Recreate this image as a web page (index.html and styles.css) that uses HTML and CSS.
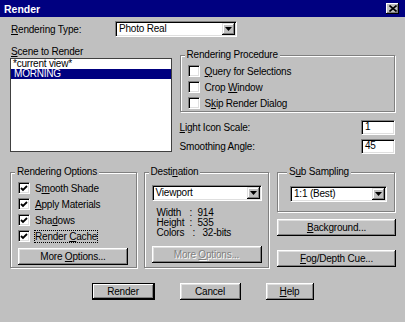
FILE: index.html
```html
<!DOCTYPE html>
<html lang="en">
<head>
    <meta charset="UTF-8">
    <meta name="viewport" content="width=device-width, initial-scale=1.0">
    <title>Render</title>
    <link rel="stylesheet" href="styles.css">
</head>
<body>
    <div class="window">
        <div class="titlebar">
            <span class="title">Render</span>
            <span class="close" aria-label="Close">
                <svg width="8" height="7" viewBox="0 0 8 7"><path d="M0.5 0.5 L7.5 6.5 M7.5 0.5 L0.5 6.5" stroke="#000" stroke-width="1.6"/></svg>
            </span>
        </div>

        <div class="content">
            <div class="type-row">
                <span class="type-label"><u>R</u>endering Type:</span>
                <div class="combo type-combo">
                    <span class="combo-value">Photo Real</span>
                    <span class="combo-arrow"><svg width="7" height="4" viewBox="0 0 7 4"><polygon points="0,0 7,0 3.5,4" fill="#000"/></svg></span>
                </div>
            </div>

            <div class="scene-row">
                <div class="scene-col">
                    <div class="scene-label"><u>S</u>cene to Render</div>
                    <ul class="listbox">
                        <li>*current view*</li>
                        <li class="selected">MORNING</li>
                    </ul>
                </div>

                <div class="proc-col">
                    <fieldset class="group proc-group">
                        <legend>Rendering Procedure</legend>
                        <div class="check-row"><span class="check"></span><span><u>Q</u>uery for Selections</span></div>
                        <div class="check-row"><span class="check"></span><span>Crop <u>W</u>indow</span></div>
                        <div class="check-row"><span class="check"></span><span>S<u>k</u>ip Render Dialog</span></div>
                    </fieldset>
                    <div class="field-row first">
                        <span><u>L</u>ight Icon Scale:</span>
                        <span class="edit">1</span>
                    </div>
                    <div class="field-row">
                        <span>Smoothing Angle:</span>
                        <span class="edit">45</span>
                    </div>
                </div>
            </div>

            <div class="options-row">
                <fieldset class="group opts-group">
                    <legend>Rendering Options</legend>
                    <div class="check-row"><span class="check on"><svg width="8" height="7" viewBox="0 0 8 7"><path d="M1 3 L3 5 L7 1" fill="none" stroke="#000" stroke-width="1.8"/></svg></span><span>S<u>m</u>ooth Shade</span></div>
                    <div class="check-row"><span class="check on"><svg width="8" height="7" viewBox="0 0 8 7"><path d="M1 3 L3 5 L7 1" fill="none" stroke="#000" stroke-width="1.8"/></svg></span><span><u>A</u>pply Materials</span></div>
                    <div class="check-row"><span class="check on"><svg width="8" height="7" viewBox="0 0 8 7"><path d="M1 3 L3 5 L7 1" fill="none" stroke="#000" stroke-width="1.8"/></svg></span><span>Sha<u>d</u>ows</span></div>
                    <div class="check-row"><span class="check on"><svg width="8" height="7" viewBox="0 0 8 7"><path d="M1 3 L3 5 L7 1" fill="none" stroke="#000" stroke-width="1.8"/></svg></span><span class="focused">Render <u>C</u>ache</span></div>
                    <button class="btn opts-btn">More <u>O</u>ptions...</button>
                </fieldset>

                <fieldset class="group dest-group">
                    <legend>Desti<u>n</u>ation</legend>
                    <div class="combo dest-combo">
                        <span class="combo-value">Viewport</span>
                        <span class="combo-arrow"><svg width="7" height="4" viewBox="0 0 7 4"><polygon points="0,0 7,0 3.5,4" fill="#000"/></svg></span>
                    </div>
                    <div class="info">
                        <span>Width</span><span>:</span><span>914</span>
                        <span>Height</span><span>:</span><span>535</span>
                        <span>Colors</span><span class="shift">:</span><span class="shift-more">32-bits</span>
                    </div>
                    <button class="btn dest-btn" disabled>More <u>O</u>ptions...</button>
                </fieldset>

                <div class="side-col">
                    <fieldset class="group sub-group">
                        <legend>S<u>u</u>b Sampling</legend>
                        <div class="combo sub-combo">
                            <span class="combo-value">1:1 (Best)</span>
                            <span class="combo-arrow"><svg width="7" height="4" viewBox="0 0 7 4"><polygon points="0,0 7,0 3.5,4" fill="#000"/></svg></span>
                        </div>
                    </fieldset>
                    <button class="btn side-btn bg-btn"><u>B</u>ackground...</button>
                    <button class="btn side-btn fog-btn"><u>F</u>og/Depth Cue...</button>
                </div>
            </div>

            <div class="actions">
                <button class="btn btn-default render-btn">Render</button>
                <button class="btn cancel-btn">Cancel</button>
                <button class="btn help-btn"><u>H</u>elp</button>
            </div>
        </div>
    </div>
</body>
</html>
```

FILE: styles.css
```css
:root {
    --face: #c0c0c0;
    --shadow: #808080;
    --light: #dfdfdf;
    --navy: #000080;
}

body {
    margin: 0;
    background-color: var(--face);
    font-family: "Liberation Sans", Arial, sans-serif;
    font-size: 10px;
    letter-spacing: -0.2px;
    color: #000;
}

u {
    text-decoration-thickness: 1px;
    text-underline-offset: 1px;
}

.window {
    width: 405px;
    height: 322px;
    background-color: var(--face);
    overflow: hidden;
}

.titlebar {
    height: 17px;
    background-color: var(--navy);
    display: flex;
    align-items: center;
    justify-content: space-between;
    padding: 0 6px 0 4px;
    box-sizing: border-box;
}

.title {
    color: #fff;
    font-weight: bold;
    font-size: 10.5px;
    letter-spacing: 0;
}

.close {
    width: 13px;
    height: 11px;
    background-color: var(--face);
    box-shadow: inset -1px -1px #000, inset 1px 1px #fff, inset -2px -2px var(--shadow);
    display: flex;
    align-items: center;
    justify-content: center;
}

.content {
    padding: 4px 10px 0 10px;
}

/* sunken controls */
.combo,
.edit,
.check {
    box-sizing: border-box;
    background-color: #fff;
    border: 1px solid;
    border-color: var(--shadow) #fff #fff var(--shadow);
    box-shadow: inset 1px 1px #000, inset -1px -1px var(--light);
}

.combo {
    display: flex;
    height: 16px;
    padding: 1px;
}

.combo-value {
    flex: 1;
    line-height: 12px;
    padding-left: 2px;
    white-space: nowrap;
}

.combo-arrow {
    width: 13px;
    background-color: var(--face);
    box-shadow: inset -1px -1px #000, inset 1px 1px var(--light), inset -2px -2px var(--shadow), inset 2px 2px #fff;
    display: flex;
    align-items: center;
    justify-content: center;
}

.type-row {
    display: flex;
    align-items: center;
    height: 16px;
}

.type-label {
    width: 105px;
    padding-left: 1px;
    box-sizing: border-box;
}

.type-combo {
    width: 122px;
}

.scene-row {
    display: flex;
    gap: 8px;
    margin-top: 9px;
}

.scene-col {
    width: 162px;
}

.scene-label {
    height: 12px;
    line-height: 12px;
    padding-left: 1px;
}

.listbox {
    list-style: none;
    margin: 0;
    padding: 0;
    height: 94px;
    box-sizing: border-box;
    background-color: #fff;
    border: 1px solid #404040;
}

.listbox li {
    height: 10px;
    line-height: 10px;
    padding-left: 2px;
    white-space: nowrap;
}

.listbox .selected {
    background-color: var(--navy);
    color: #fff;
    padding-left: 3px;
}

.proc-col {
    width: 216px;
    margin-top: 3px;
}

/* group boxes */
.group {
    margin: 0;
    padding: 0 6px 0 7px;
    border: 1px solid var(--shadow);
    box-shadow: 1px 1px #fff, inset 1px 1px #fff;
    box-sizing: border-box;
    min-width: 0;
}

.group legend {
    padding: 0 2px;
    margin-left: -3px;
    line-height: 12px;
    background-color: var(--face);
}

.proc-group {
    padding-top: 2px;
}

.check-row {
    display: flex;
    align-items: center;
    gap: 5px;
    height: 16px;
    white-space: nowrap;
}

.check {
    width: 12px;
    height: 12px;
    display: flex;
    align-items: center;
    justify-content: center;
    flex-shrink: 0;
}

.focused {
    outline: 1px dotted #000;
    outline-offset: 0;
}

.field-row {
    display: flex;
    justify-content: space-between;
    align-items: center;
    height: 15px;
    margin-top: 4px;
}

.field-row.first {
    margin-top: 8px;
}

.edit {
    width: 34px;
    height: 15px;
    padding-left: 3px;
    line-height: 12px;
}

.options-row {
    display: flex;
    margin-top: 12px;
}

.opts-group {
    width: 127px;
    margin-right: 7px;
    padding-top: 2px;
    padding-bottom: 2px;
}

.dest-group {
    width: 126px;
    margin-right: 8px;
}

.side-col {
    width: 118px;
    display: flex;
    flex-direction: column;
}

/* buttons */
.btn {
    height: 17px;
    padding: 0;
    border: none;
    background-color: var(--face);
    font: inherit;
    letter-spacing: inherit;
    color: #000;
    box-shadow: inset -1px -1px #000, inset 1px 1px #fff, inset -2px -2px var(--shadow), inset 2px 2px var(--light);
}

.btn:disabled {
    color: var(--shadow);
    text-shadow: 1px 1px #fff;
}

.btn-default {
    box-shadow: inset 0 0 0 1px #000, inset -2px -2px #000, inset 2px 2px #fff, inset -3px -3px var(--shadow);
}

.opts-btn {
    width: 110px;
    margin-top: 4px;
}

.dest-combo {
    width: 110px;
    margin-top: 7px;
}

.info {
    display: grid;
    grid-template-columns: 33px 8px auto;
    line-height: 10px;
    margin: 7px 0 0 5px;
}

.info .shift {
    padding-left: 3px;
}

.info .shift-more {
    padding-left: 5px;
}

.dest-btn {
    width: 110px;
    margin-top: 8px;
}

.sub-group {
    padding: 0 0 9px 12px;
}

.sub-combo {
    width: 97px;
    margin-top: 8px;
}

.side-btn {
    width: 119px;
}

.bg-btn {
    margin-top: 7px;
}

.fog-btn {
    margin-top: 14px;
}

.actions {
    display: flex;
    justify-content: center;
    gap: 25px;
    margin-top: 15px;
}

.render-btn {
    width: 63px;
}

.cancel-btn {
    width: 61px;
}

.help-btn {
    width: 48px;
}
```
